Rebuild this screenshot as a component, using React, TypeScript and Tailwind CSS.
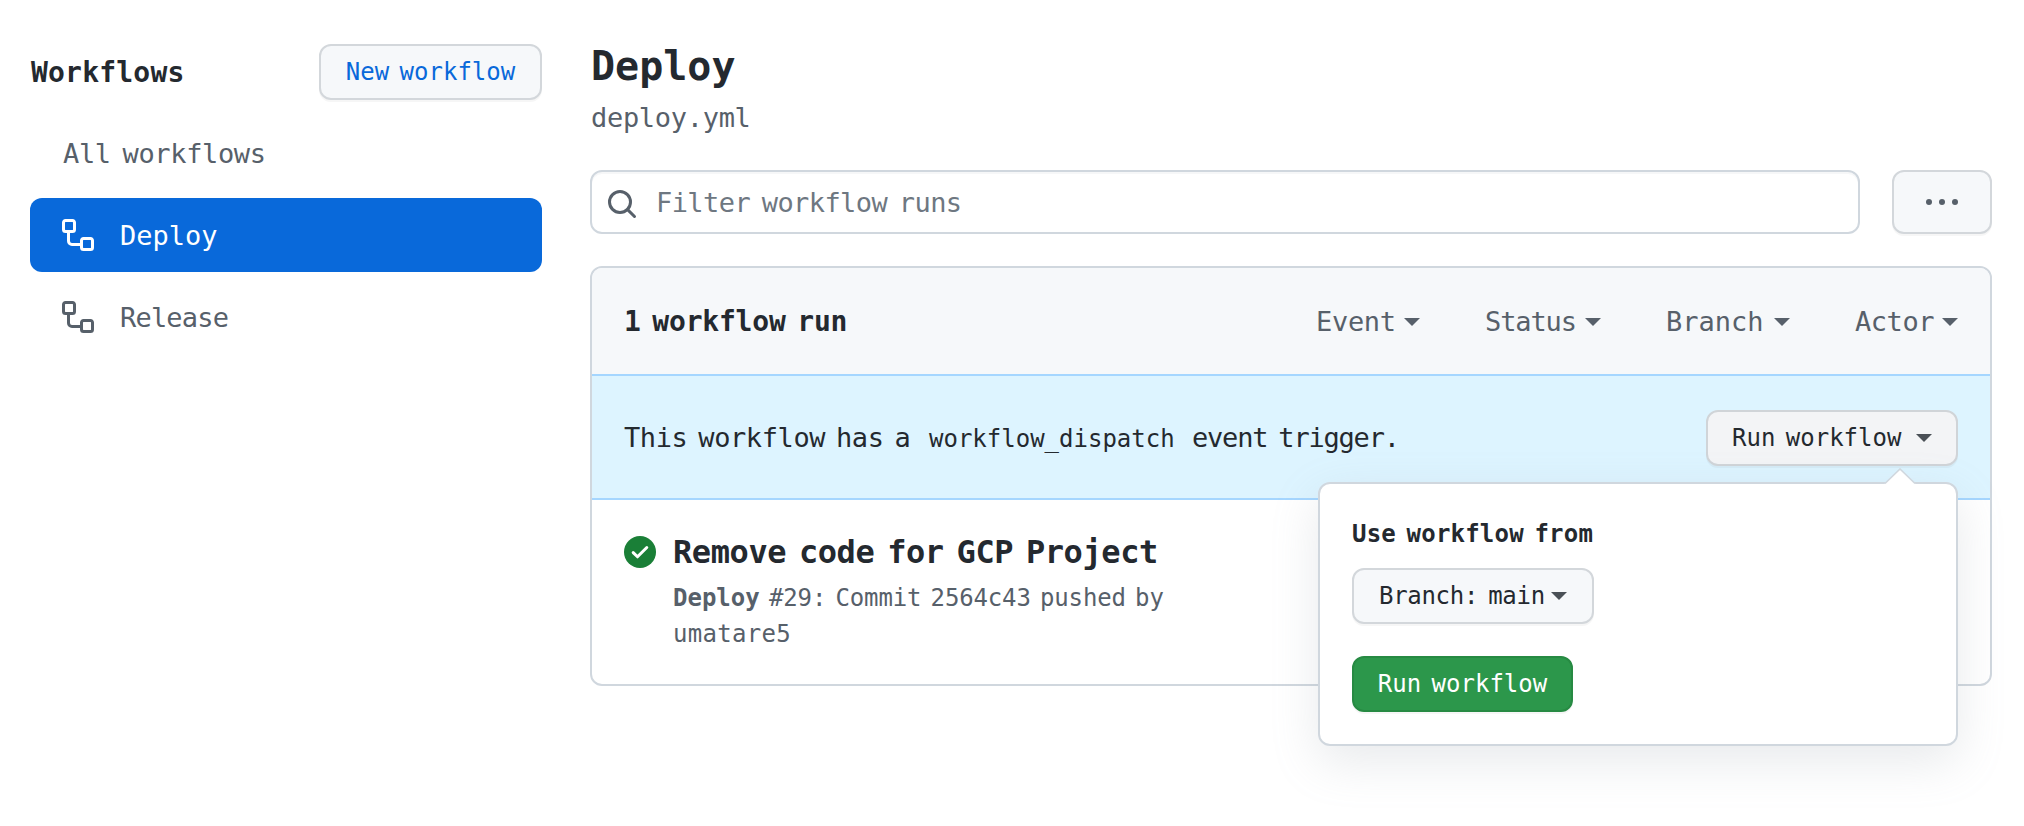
import type { ReactNode } from "react";

const button =
  "flex items-center rounded-xl border-2 h-14 text-[24px] leading-none whitespace-pre shadow-[0_2px_0_rgba(27,31,36,0.04)] [word-spacing:-4px]";

function WorkflowIcon() {
  return (
    <svg viewBox="0 0 16 16" className="size-8 shrink-0" fill="currentColor">
      <path d="M0 1.75C0 .784.784 0 1.75 0h3.5C6.216 0 7 .784 7 1.75v3.5A1.75 1.75 0 0 1 5.25 7H4v4a1 1 0 0 0 1 1h4v-1.25C9 9.784 9.784 9 10.75 9h3.5c.966 0 1.75.784 1.75 1.75v3.5A1.75 1.75 0 0 1 14.25 16h-3.5A1.75 1.75 0 0 1 9 14.25v-.75H5A2.5 2.5 0 0 1 2.5 11V7h-.75A1.75 1.75 0 0 1 0 5.25Zm1.75-.25a.25.25 0 0 0-.25.25v3.5c0 .138.112.25.25.25h3.5a.25.25 0 0 0 .25-.25v-3.5a.25.25 0 0 0-.25-.25Zm9 9a.25.25 0 0 0-.25.25v3.5c0 .138.112.25.25.25h3.5a.25.25 0 0 0 .25-.25v-3.5a.25.25 0 0 0-.25-.25Z" />
    </svg>
  );
}

function SearchIcon() {
  return (
    <svg
      viewBox="0 0 32 32"
      className="mt-1 size-8 shrink-0 text-[#57606a]"
      fill="none"
      stroke="currentColor"
      strokeWidth="3"
      strokeLinecap="round"
    >
      <circle cx="14" cy="14" r="10.5" />
      <path d="M21.6 21.6 28.5 28.5" />
    </svg>
  );
}

function Caret({ className }: { className: string }) {
  return (
    <svg viewBox="0 0 16 8" className={`h-2 w-4 shrink-0 ${className}`} fill="currentColor">
      <path d="M0 0h16L8 8Z" />
    </svg>
  );
}

function Filter({ className, children }: { className: string; children: ReactNode }) {
  return (
    <div className={`flex items-center justify-between ${className}`}>
      <span>{children}</span>
      <Caret className="mt-px" />
    </div>
  );
}

function Sidebar() {
  return (
    <aside className="mt-11 ml-[30px] w-[512px] shrink-0 text-[27px] leading-none text-[#57606a]">
      <div className="flex h-14 items-center justify-between">
        <h2 className="pt-px pl-px text-[28px] leading-none font-bold tracking-[0.2px] text-[#24292f]">Workflows</h2>
        <button className={`${button} w-[223px] justify-center border-[#d3d7db] bg-[#f6f8fa] text-[#0969da]`}>
          New workflow
        </button>
      </div>
      <nav className="mt-4 flex flex-col gap-2">
        <a className="flex h-[74px] items-center pl-[33px] tracking-[-0.36px] [word-spacing:-4px]">All workflows</a>
        <a className="flex h-[74px] items-center gap-[26px] rounded-xl bg-[#0969da] pl-8 text-white">
          <WorkflowIcon />
          <span>Deploy</span>
        </a>
        <a className="flex h-[74px] items-center gap-[26px] pl-8">
          <WorkflowIcon />
          <span className="tracking-[-0.8px]">Release</span>
        </a>
      </nav>
    </aside>
  );
}

function RunPopover() {
  return (
    <div className="absolute top-[72px] right-0 z-10 h-[264px] w-[640px] rounded-xl border-2 border-[#d0d7de] bg-white pt-8 pl-8 text-[#24292f] shadow-[0_16px_48px_rgba(140,149,159,0.2)]">
      <svg viewBox="0 0 32 18" className="absolute -top-[16px] right-[40px] h-[18px] w-8">
        <path d="M0 16.5 16 1 32 16.5V18H0Z" fill="white" />
        <path d="M1 15.5 16 1 31 15.5" fill="none" stroke="#d0d7de" strokeWidth="1.6" />
      </svg>
      <div className="h-[52px] pt-[3px] text-[24px] leading-[30px] font-bold tracking-[0.2px] [word-spacing:-4px]">
        Use workflow from
      </div>
      <button className={`${button} w-[242px] border-[#d3d7db] bg-[#f6f8fa] pl-[25px]`}>
        <span className="tracking-[-0.3px]">Branch: main</span>
        <Caret className="ml-1.5 text-[#4a5056]" />
      </button>
      <button
        className={`${button} mt-8 w-[221px] justify-center border-[#278a43] bg-[#2c974b] text-white`}
      >
        Run workflow
      </button>
    </div>
  );
}

export default function App() {
  return (
    <div
      className="flex h-[826px] w-[2024px] overflow-hidden bg-white"
      style={{ fontFamily: '"DejaVu Sans Mono", monospace' }}
    >
      <Sidebar />
      <main className="ml-12 w-[1402px] pt-10">
        <h1 className="h-[54px] pl-px text-[40px] leading-[52px] font-bold text-[#24292f]">Deploy</h1>
        <div className="h-[76px] pl-px text-[27px] leading-[48px] tracking-[-0.3px] text-[#57606a]">deploy.yml</div>

        <div className="flex gap-8">
          <div className="flex h-16 w-[1270px] items-center gap-[18px] rounded-xl border-2 border-[#d0d7de] pl-3.5 text-[27px] leading-none text-[#6e7781] shadow-[inset_0_2px_0_rgba(208,215,222,0.2)]">
            <SearchIcon />
            <span className="tracking-[-0.58px] [word-spacing:-4px]">Filter workflow runs</span>
          </div>
          <button className="flex h-16 w-[100px] items-center justify-center gap-[7px] rounded-xl border-2 border-[#d3d7db] bg-[#f6f8fa] shadow-[0_2px_0_rgba(27,31,36,0.04)]">
            <span className="size-1.5 rounded-full bg-[#57606a]" />
            <span className="size-1.5 rounded-full bg-[#57606a]" />
            <span className="size-1.5 rounded-full bg-[#57606a]" />
          </button>
        </div>

        <section className="mt-8 h-[420px] rounded-xl border-2 border-[#d0d7de] text-[27px] leading-none">
          <header className="flex h-[106px] items-center rounded-t-[10px] bg-[#f6f8fa] pr-8 pl-8 text-[#57606a]">
            <h3 className="mr-auto pt-0.5 text-[28px] leading-none font-bold tracking-[-0.2px] text-[#24292f] [word-spacing:-5px]">
              1 workflow run
            </h3>
            <div className="flex gap-[65px]">
              <Filter className="w-[104px] tracking-[-0.3px]">Event</Filter>
              <Filter className="w-[116px] tracking-[-1.1px]">Status</Filter>
              <Filter className="w-[124px]">Branch</Filter>
              <Filter className="w-[103px] tracking-[-0.45px]">Actor</Filter>
            </div>
          </header>

          <div className="relative flex h-[126px] items-center border-y-2 border-[#a5d6ff] bg-[#ddf4ff] pr-8 pl-8 text-[#24292f]">
            <p className="mr-auto flex items-baseline whitespace-nowrap">
              <span className="w-[305px] tracking-[-0.4px] [word-spacing:-5px]">This workflow has a</span>
              <code className="w-[263px] text-[24px]" style={{ fontFamily: "inherit" }}>
                workflow_dispatch
              </code>
              <span className="tracking-[-1.2px] [word-spacing:-4px]">event trigger.</span>
            </p>
            <div className="relative mt-0.5">
              <button className={`${button} w-[252px] border-[#d0d4d8] bg-[#f3f4f6] pl-6`}>
                <span>Run workflow</span>
                <Caret className="ml-[15px] text-[#4a5056]" />
              </button>
              <RunPopover />
            </div>
          </div>

          <div className="flex pt-9 pl-8">
            <svg viewBox="0 0 32 32" className="size-8 shrink-0">
              <circle cx="16" cy="16" r="16" fill="#1a7f37" />
              <path
                d="M9.2 16.6 13.5 20.8 22.8 11.5"
                fill="none"
                stroke="white"
                strokeWidth="3"
                strokeLinecap="round"
                strokeLinejoin="round"
              />
            </svg>
            <div className="ml-[17px]">
              <h4 className="text-[32px] leading-8 font-bold tracking-[-0.42px] whitespace-nowrap text-[#24292f] [word-spacing:-6px]">
                Remove code for GCP Project
              </h4>
              <p className="mt-3 w-[520px] text-[24px] leading-9 tracking-[-0.15px] text-[#57606a] [word-spacing:-5px]">
                <b className="tracking-normal">Deploy</b> #29: Commit 2564c43 pushed by{" "}
                <span className="tracking-[0.3px]">umatare5</span>
              </p>
            </div>
          </div>
        </section>
      </main>
    </div>
  );
}
